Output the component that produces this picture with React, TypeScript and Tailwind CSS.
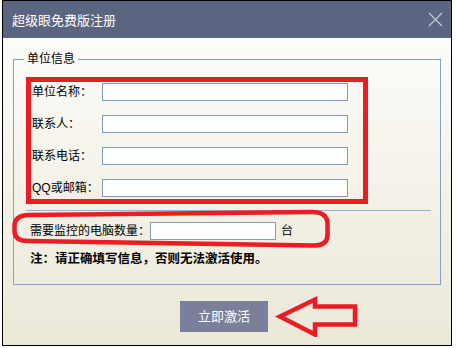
import React from "react";

const fields = ["单位名称：", "联系人：", "联系电话：", "QQ或邮箱："];

function CloseIcon() {
  return (
    <svg width="15" height="15" viewBox="0 0 15 15">
      <path d="M1 1 L14 14 M14 1 L1 14" stroke="#c3c7d4" strokeWidth="1.3" />
    </svg>
  );
}

function Arrow() {
  // red hollow arrow drawn over the screenshot, pointing at the button
  return (
    <svg width="88" height="42" viewBox="0 0 88 42" className="ml-[4px] shrink-0">
      <path
        d="M8 21.5 L43 4.5 L43 11.5 L83 11.5 L83 29.5 L43 29.5 L43 39.5 Z"
        fill="none"
        stroke="#ed1c24"
        strokeWidth="4.5"
      />
    </svg>
  );
}

export default function App() {
  return (
    <div className="w-[456px] h-[348px] bg-white overflow-hidden font-['Liberation_Sans','Noto_Sans_CJK_SC',sans-serif] text-black">
      <div className="ml-[2px] w-[450px] h-[346px] border border-black flex flex-col">
        {/* title bar */}
        <div className="h-[37px] bg-[#5b6480] flex items-center justify-between pl-[9px] pr-[8px]">
          <span className="text-white text-[13px] leading-[18px] pt-[2px]">超级眼免费版注册</span>
          <CloseIcon />
        </div>

        {/* body */}
        <div className="flex-1 bg-linear-to-b from-[#fcfbf8] to-[#ebe8d8]">
          <fieldset className="mx-[10px] mt-[12px] border border-[#7fa2c6] pt-[9px] pb-[16px]">
            <legend className="ml-[10px] px-[3px] text-[12px] leading-[18px]">单位信息</legend>

            <div className="ml-[12px] w-[342px] border-[5px] border-[#ed1c24] flex flex-col gap-[14px] pt-[1px] pb-[2px] pl-[1px]">
              {fields.map((label) => (
                <div key={label} className="flex items-center h-[18px]">
                  <span className="w-[70px] text-[12px] leading-[18px]">{label}</span>
                  <input className="w-[246px] h-[18px] border border-[#7f9db9] bg-white outline-none" />
                </div>
              ))}
            </div>

            <div className="ml-[12px] mr-[9px] mt-[6px] h-px bg-[#8fb3dd]" />

            <div className="relative mt-[11px] flex items-center h-[18px] pl-[16px]">
              <span className="w-[120px] text-[12px] leading-[18px]">需要监控的电脑数量：</span>
              <input className="w-[126px] h-[18px] border border-[#7f9db9] bg-white outline-none" />
              <span className="ml-[5px] text-[12px] leading-[18px]">台</span>
              <svg width="324" height="44" viewBox="0 0 324 44" className="absolute left-[-4px] top-[-16px] pointer-events-none">
                <path
                  d="M20 9 L302 6 Q317.5 6 317.5 18 L317.5 29 Q317.5 39.5 304 39.5 L18 35 Q4.5 35 4.5 25 L4.5 20 Q4.5 9 20 9 Z"
                  fill="none"
                  stroke="#ed1c24"
                  strokeWidth="4.5"
                />
              </svg>
            </div>

            <div className="mt-[10px] pl-[16px] text-[12.5px] leading-[18px] font-bold">
              注：请正确填写信息，否则无法激活使用。
            </div>
          </fieldset>

          <div className="mt-[10px] flex items-center">
            <button className="ml-[177px] w-[88px] h-[31px] bg-[#7a8099] text-white text-[13px] leading-[31px]">
              立即激活
            </button>
            <Arrow />
          </div>
        </div>
      </div>
    </div>
  );
}
